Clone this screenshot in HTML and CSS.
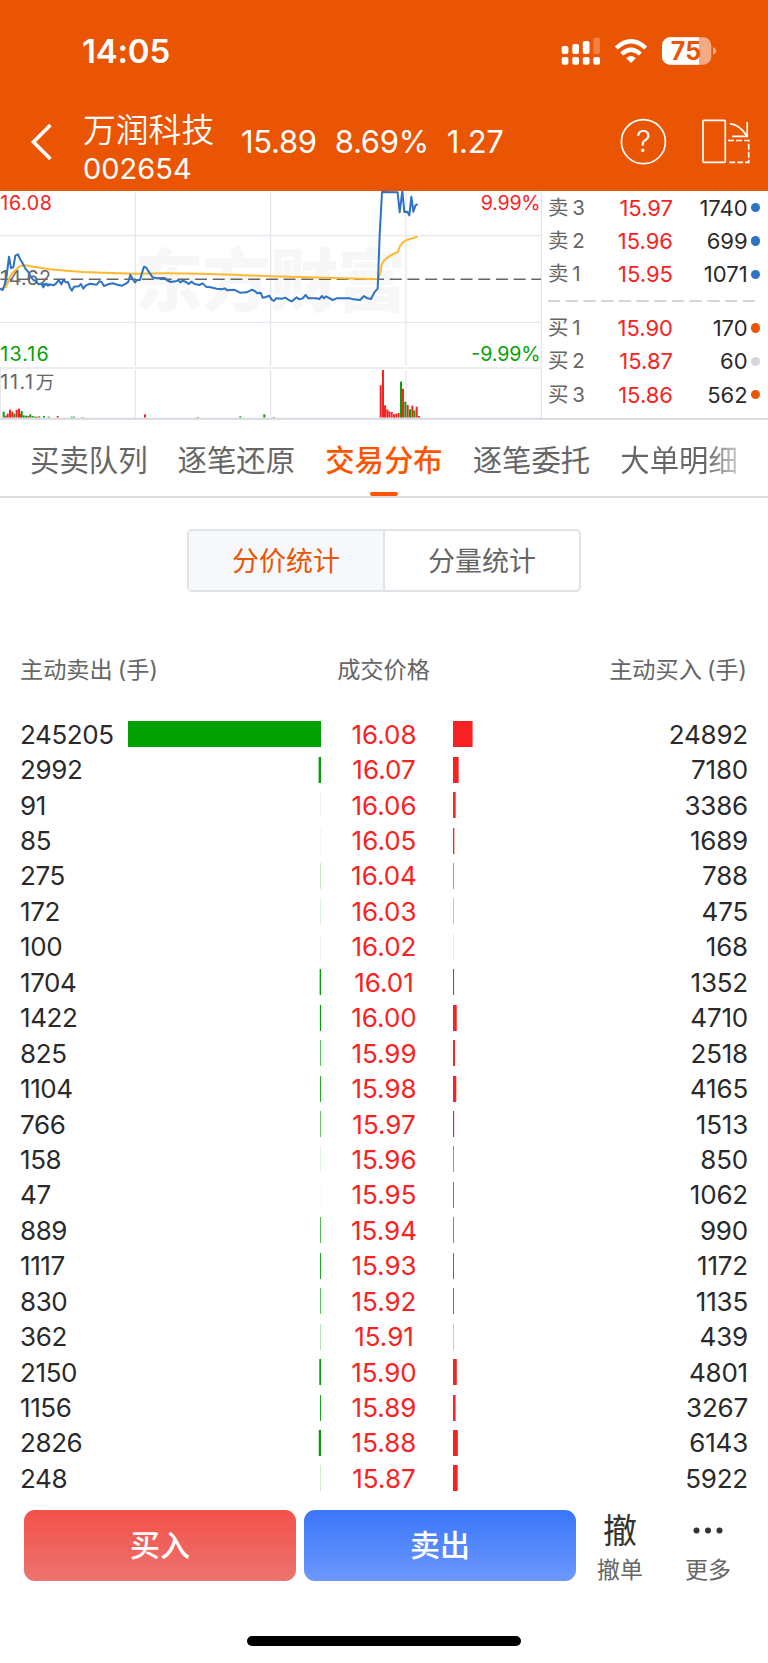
FILE: index.html
```html
<!DOCTYPE html>
<html lang="zh-CN">
<head>
    <meta charset="UTF-8">
    <meta name="viewport" content="width=device-width, initial-scale=1.0">
    <title>万润科技 002654</title>
    <link rel="stylesheet" href="styles.css">
</head>
<body>
    <header class="header">
        <div class="status-bar">
            <span class="clock">14:05</span>
            <svg class="status-icons" width="158" height="32" viewBox="560 35 158 32">
                <g fill="#fff">
                    <rect x="561.7" y="46" width="6.7" height="8" rx="2"/>
                    <rect x="572.3" y="44" width="6.7" height="10" rx="2"/>
                    <rect x="582.8" y="41" width="6.7" height="13" rx="2"/>
                    <rect x="593.3" y="37.5" width="6.7" height="16.5" rx="2" opacity=".25"/>
                    <rect x="561.7" y="57" width="6.7" height="7.7" rx="2"/>
                    <rect x="572.3" y="57" width="6.7" height="7.7" rx="2"/>
                    <rect x="582.8" y="57" width="6.7" height="7.7" rx="2"/>
                    <rect x="593.3" y="57" width="6.7" height="7.7" rx="2"/>
                    <path d="M631 63 L626.2 58.2 Q631 54 635.8 58.2 Z"/>
                </g>
                <g fill="none" stroke="#fff" stroke-width="4.4">
                    <path d="M616.3 48 Q631 34.4 645.7 48"/>
                    <path d="M621.7 54 Q631 45.4 640.3 54"/>
                </g>
                <clipPath id="cell"><rect x="662" y="37.3" width="49.3" height="27.4" rx="8"/></clipPath>
                <g clip-path="url(#cell)">
                    <rect x="662" y="37" width="50" height="28" fill="#f5ab82"/>
                    <rect x="662" y="37" width="37" height="28" fill="#fff"/>
                </g>
                <path d="M713 47.3 Q716 48.3 716 51 Q716 53.7 713 54.7 Z" fill="#f5ab82"/>
                <text class="battery-text" x="686" y="60" text-anchor="middle">75</text>
            </svg>
        </div>
        <div class="nav">
            <svg class="back" width="22" height="38" viewBox="0 0 22 38">
                <path d="M20.5 2 L3.5 19 L20.5 36" fill="none" stroke="#fff" stroke-width="3.6"/>
            </svg>
            <div class="stock">
                <div class="stock-name">万润科技</div>
                <div class="stock-code">002654</div>
            </div>
            <div class="stock-price">
                <span>15.89</span>
                <span>8.69%</span>
                <span>1.27</span>
            </div>
            <svg class="nav-icons" width="130" height="48" viewBox="620 118 130 48">
                <g fill="none" stroke="#fff" stroke-width="1.7">
                    <circle cx="643.4" cy="141.7" r="22"/>
                    <rect x="703" y="120.3" width="22.3" height="42" rx="1"/>
                    <path d="M730 123.7 Q740 125 746.5 135.5 M747.2 122 V136.4 H732"/>
                    <path d="M728 140.5 H748.7 V162.3 H728" stroke-dasharray="6 2"/>
                </g>
                <text class="help-mark" x="643.4" y="152.3" text-anchor="middle">?</text>
            </svg>
        </div>
    </header>

    <section class="market">
        <svg class="chart" width="542" height="228" viewBox="0 18 1626 684">
            <text class="watermark" x="403" y="362" textLength="815">东方财富</text>
            <g class="grid">
                <path d="M406 23V543 M812 23V543 M1218 23V543 M0 152H1623 M0 412H1623"/>
                <path d="M406 555V698 M812 555V698 M1218 555V698 M0 549H1623 M1 549V700"/>
                <path d="M1624 15V700"/>
            </g>
            <path class="middle" d="M1 282.5H1623"/>
            <text class="label gray" x="1" y="300" textLength="152">14.62</text>
            <path class="average" d="M0 312 L18 306 L24 290 L30 275 L38 263 L50 252 L60 243 L75 241 L100 245 L150 253 L200 257 L250 261 L330 264 L400 266 L500 265 L600 266 L700 269 L812 274 L900 276 L1000 279 L1080 281 L1134 282 L1141 265 L1145 239 L1151 228 L1163 217 L1177 208 L1194 201 L1200 183 L1208 173 L1220 165 L1253 155"/>
            <path class="price" d="M0 311 L8 315 L14 298 L20 272 L27 215 L33 249 L40 247 L46 212 L54 208 L60 222 L68 235 L76 251 L84 260 L92 274 L100 285 L108 288 L116 298 L124 295 L130 307 L136 296 L144 302 L152 298 L160 301 L168 296 L176 285 L184 298 L190 285 L198 292 L204 291 L210 308 L216 317 L222 305 L236 304 L243 297 L250 311 L257 302 L270 296 L290 299 L298 289 L304 290 L312 303 L324 298 L338 295 L352 299 L366 302 L378 296 L385 290 L391 269 L398 282 L405 292 L411 285 L420 285 L426 264 L432 245 L438 247 L446 260 L458 277 L470 280 L494 279 L500 285 L512 291 L526 289 L535 286 L541 292 L548 287 L558 291 L566 297 L574 290 L584 297 L598 300 L608 295 L618 305 L632 307 L650 311 L666 313 L674 310 L682 316 L702 314 L720 323 L740 322 L756 314 L764 318 L772 325 L782 323 L788 338 L798 336 L808 332 L814 343 L822 348 L828 340 L846 341 L856 338 L866 345 L876 349 L890 337 L898 343 L908 340 L917 330 L925 340 L948 340 L958 342 L966 333 L972 340 L978 334 L998 345 L1010 340 L1050 340 L1060 343 L1080 345 L1092 333 L1102 340 L1113 342 L1123 322 L1133 311 L1139 150 L1146 21 L1193 22 L1199 82 L1207 18 L1213 81 L1222 80 L1228 91 L1234 35 L1240 80 L1246 62 L1253 57"/>
            <g class="rise" id="rise"></g>
            <g class="fall" id="fall"></g>
            <path class="base" d="M0 700H1626"/>
            <text class="label red" x="1" y="75" textLength="155">16.08</text>
            <text class="label green" x="1" y="527" textLength="145">13.16</text>
            <text class="label gray" x="1" y="611" textLength="98">11.1</text>
            <text class="label gray cjk" x="107" y="611">万</text>
            <text class="label red" x="1442" y="75" textLength="180">9.99%</text>
            <text class="label green" x="1414" y="527" textLength="208">-9.99%</text>
        </svg>
        <div class="quotes">
            <div class="quote"><span class="side">卖 3</span><span class="quote-price">15.97</span><span class="amount">1740</span><i class="dot blue"></i></div>
            <div class="quote"><span class="side">卖 2</span><span class="quote-price">15.96</span><span class="amount">699</span><i class="dot blue"></i></div>
            <div class="quote"><span class="side">卖 1</span><span class="quote-price">15.95</span><span class="amount">1071</span><i class="dot blue"></i></div>
            <svg class="divider" width="210" height="20" viewBox="0 0 210 20">
                <path d="M0 10H208" stroke="#d3d6de" stroke-width="2" stroke-dasharray="12.3 5.4"/>
            </svg>
            <div class="quote"><span class="side">买 1</span><span class="quote-price">15.90</span><span class="amount">170</span><i class="dot orange"></i></div>
            <div class="quote"><span class="side">买 2</span><span class="quote-price">15.87</span><span class="amount">60</span><i class="dot"></i></div>
            <div class="quote"><span class="side">买 3</span><span class="quote-price">15.86</span><span class="amount">562</span><i class="dot orange"></i></div>
        </div>
    </section>

    <nav class="tabs">
        <span class="tab">买卖队列</span>
        <span class="tab">逐笔还原</span>
        <span class="tab active">交易分布</span>
        <span class="tab">逐笔委托</span>
        <span class="tab last">大单明细</span>
    </nav>

    <div class="segment">
        <div class="segment-item selected">分价统计</div>
        <div class="segment-item">分量统计</div>
    </div>

    <div class="table-head">
        <span>主动卖出 (手)</span>
        <span>成交价格</span>
        <span>主动买入 (手)</span>
    </div>
    <div class="table" id="table"></div>

    <footer class="actions">
        <div class="button buy">买入</div>
        <div class="button sell">卖出</div>
        <div class="action">
            <span class="action-icon">撤</span>
            <span class="action-label">撤单</span>
        </div>
        <div class="action">
            <svg class="action-icon" width="32" height="42" viewBox="0 0 32 42" fill="#333">
                <circle cx="4.5" cy="20.5" r="3"/><circle cx="16" cy="20.5" r="3"/><circle cx="27.5" cy="20.5" r="3"/>
            </svg>
            <span class="action-label">更多</span>
        </div>
    </footer>
    <div class="home-indicator"></div>

    <script>
        // price, sell volume, buy volume
        const rows = [
            ["16.08", 245205, 24892],
            ["16.07", 2992, 7180],
            ["16.06", 91, 3386],
            ["16.05", 85, 1689],
            ["16.04", 275, 788],
            ["16.03", 172, 475],
            ["16.02", 100, 168],
            ["16.01", 1704, 1352],
            ["16.00", 1422, 4710],
            ["15.99", 825, 2518],
            ["15.98", 1104, 4165],
            ["15.97", 766, 1513],
            ["15.96", 158, 850],
            ["15.95", 47, 1062],
            ["15.94", 889, 990],
            ["15.93", 1117, 1172],
            ["15.92", 830, 1135],
            ["15.91", 362, 439],
            ["15.90", 2150, 4801],
            ["15.89", 1156, 3267],
            ["15.88", 2826, 6143],
            ["15.87", 248, 5922]
        ];
        const barWidth = 193;
        const maxVolume = 245205;

        document.getElementById("table").innerHTML = rows.map(([price, sell, buy]) => {
            const sellWidth = sell / maxVolume * barWidth;
            const buyWidth = buy / maxVolume * barWidth;
            return `<div class="row">
                <span class="sell-volume">${sell}</span>
                <svg class="bar" width="193" height="26"><rect class="sell-bar" x="${barWidth - sellWidth}" width="${sellWidth}" height="26"/></svg>
                <span class="row-price">${price}</span>
                <svg class="bar" width="193" height="26"><rect class="buy-bar" width="${buyWidth}" height="26"/></svg>
                <span class="buy-volume">${buy}</span>
            </div>`;
        }).join("");

        // volume bars: [x, height]
        const rise = [[14, 6], [20, 12], [27, 24], [34, 18], [47, 24], [54, 27], [60, 12], [82, 5], [108, 3], [170, 5], [245, 2], [432, 10],
            [1139, 97], [1146, 143], [1152, 37], [1159, 25], [1165, 19], [1172, 17], [1179, 10], [1186, 12], [1193, 14],
            [1206, 87], [1220, 38], [1234, 36], [1247, 33], [1254, 5]];
        const fall = [[8, 18], [40, 12], [62, 20], [68, 7], [75, 6], [88, 10], [95, 5], [102, 3], [115, 4], [129, 5], [143, 3], [212, 3], [219, 3],
            [590, 2], [718, 4], [790, 10], [818, 2], [1200, 108], [1213, 48], [1227, 25], [1240, 22]];

        function drawVolume(id, bars) {
            document.getElementById(id).innerHTML = bars.map(([x, h]) =>
                `<rect x="${x}" y="${698 - h}" width="6" height="${h}"/>`).join("");
        }
        drawVolume("rise", rise);
        drawVolume("fall", fall);
    </script>
</body>
</html>
```
FILE: styles.css
```css
* {
    box-sizing: border-box;
}

body {
    margin: 0;
    width: 768px;
    height: 1663px;
    overflow: hidden;
    background: #fff;
    color: #2a2a2a;
    font-family: Inter, "Noto Sans CJK SC", sans-serif;
}

svg {
    display: block;
    flex: none;
}

.header {
    height: 191px;
    background: #ea5504;
    color: #fff;
}

.status-bar {
    height: 102px;
    padding: 0 50px 0 82px;
    display: flex;
    justify-content: space-between;
    align-items: center;
}

.clock {
    font-size: 33px;
    font-weight: 600;
    letter-spacing: -0.2px;
}

.battery-text {
    font-size: 25px;
    font-weight: 700;
    fill: #ea5504;
}

.nav {
    height: 89px;
    padding: 0 18px 0 30px;
    display: flex;
    align-items: flex-start;
}

.back {
    margin-top: 21px;
}

.stock {
    width: 158px;
    margin-left: 31px;
}

.stock-name {
    height: 42px;
    line-height: 57px;
    font-size: 32.8px;
    font-weight: 350;
}

.stock-code {
    line-height: 49px;
    font-size: 29px;
}

.stock-price {
    display: flex;
    gap: 18px;
    line-height: 80px;
    font-size: 31px;
    letter-spacing: -0.3px;
}

.nav-icons {
    margin: 16px 0 0 auto;
}

.help-mark {
    font-size: 30px;
    font-weight: 300;
    fill: #fff;
}

.market {
    height: 228px;
    display: flex;
}

.grid {
    fill: none;
    stroke: #e4e7ee;
    stroke-width: 4;
}

.base {
    stroke: #d9dbe2;
    stroke-width: 4;
}

.middle {
    stroke: #666;
    stroke-width: 4.5;
    stroke-dasharray: 36 17.1;
}

.average,
.price {
    fill: none;
    stroke-width: 6;
    stroke-linejoin: round;
}

.average {
    stroke: #ffb92e;
}

.price {
    stroke: #2d72c4;
}

.watermark {
    font-size: 205px;
    font-weight: 900;
    fill: #f7f7f7;
}

.label {
    font-size: 59px;
}

.cjk {
    font-size: 56px;
}

.red {
    fill: #f82222;
}

.green {
    fill: #07a007;
}

.gray {
    fill: #666;
}

.rise {
    fill: #f82222;
}

.fall {
    fill: #07a007;
}

.quotes {
    flex: 1;
    padding: 0 8px 0 6px;
    border-bottom: 1px solid #d9dbe2;
}

.quote {
    height: 33.4px;
    display: flex;
    align-items: center;
    font-size: 22px;
}

.side {
    width: 44px;
    color: #666;
    font-size: 20.5px;
    line-height: 28px;
    word-spacing: -2px;
    white-space: nowrap;
}

.quote-price {
    width: 81px;
    text-align: right;
    color: #f82222;
}

.amount {
    flex: 1;
    text-align: right;
}

.dot {
    width: 9.4px;
    height: 9.4px;
    margin-left: 3px;
    border-radius: 50%;
    background: #d3d6de;
}

.blue {
    background: #2d72c4;
}

.orange {
    background: #ea5504;
}

.tabs {
    height: 79px;
    padding-left: 30px;
    display: flex;
    gap: 30px;
    border-top: 1px solid #dcdee4;
    border-bottom: 2px solid #dcdee4;
    color: #666;
    font-size: 29.4px;
    line-height: 82px;
    white-space: nowrap;
}

.tab {
    display: flex;
    flex-direction: column;
    align-items: center;
    height: 77px;
}

.active {
    color: #ff5500;
    font-weight: 500;
}

.active::after {
    content: "";
    flex: none;
    width: 28px;
    height: 4px;
    margin-top: -10px;
    border-radius: 2px;
    background: #ff5500;
}

.last {
    color: transparent;
    background: linear-gradient(to right, #666 72%, #ccc);
    background-clip: text;
    -webkit-background-clip: text;
}

.segment {
    width: 394px;
    height: 63px;
    margin: 31px auto 0;
    display: flex;
    border: 2px solid #dfe2e7;
    border-radius: 5px;
    color: #666;
    font-size: 27px;
    line-height: 61px;
    text-align: center;
}

.segment-item {
    flex: 1;
}

.selected {
    background: #f6f8fb;
    color: #ea5504;
    border-right: 2px solid #dfe2e7;
}

.table-head {
    height: 124.5px;
    padding: 54px 21px 0 20px;
    display: grid;
    grid-template-columns: 1fr auto 1fr;
    color: #666;
    font-size: 23.2px;
    line-height: 48px;
    word-spacing: -1.5px;
}

.table-head span:last-child {
    text-align: right;
}

.row {
    height: 35.44px;
    padding: 0 20px;
    display: flex;
    align-items: center;
    font-size: 26px;
}

.sell-volume {
    width: 108px;
    letter-spacing: -0.4px;
}

.row-price {
    width: 132px;
    padding-right: 6px;
    text-align: center;
    color: #f82222;
}

.buy-volume {
    flex: 1;
    text-align: right;
    letter-spacing: -0.2px;
}

.sell-bar {
    fill: #00a000;
}

.buy-bar {
    fill: #f82222;
}

.actions {
    margin-top: 14px;
    padding-left: 24px;
    height: 72px;
    display: flex;
}

.button {
    width: 272px;
    height: 71px;
    margin-right: 8px;
    border-radius: 11px;
    color: #fff;
    font-size: 30px;
    font-weight: 500;
    line-height: 71px;
    text-align: center;
}

.buy {
    background: linear-gradient(#f4504a, #ec736e);
}

.sell {
    background: linear-gradient(#3a76fa, #6c98fe);
}

.action {
    width: 88px;
    margin-left: -8px;
    display: flex;
    flex-direction: column;
    align-items: center;
}

.action + .action {
    margin-left: 0;
}

.action-icon {
    height: 42px;
    line-height: 42px;
    font-size: 34px;
    font-weight: 400;
    color: #333;
}

.action-label {
    line-height: 37px;
    font-size: 23px;
    color: #666;
}

.home-indicator {
    width: 274px;
    height: 10px;
    margin: 54px auto 0;
    border-radius: 5px;
    background: #000;
}
```
